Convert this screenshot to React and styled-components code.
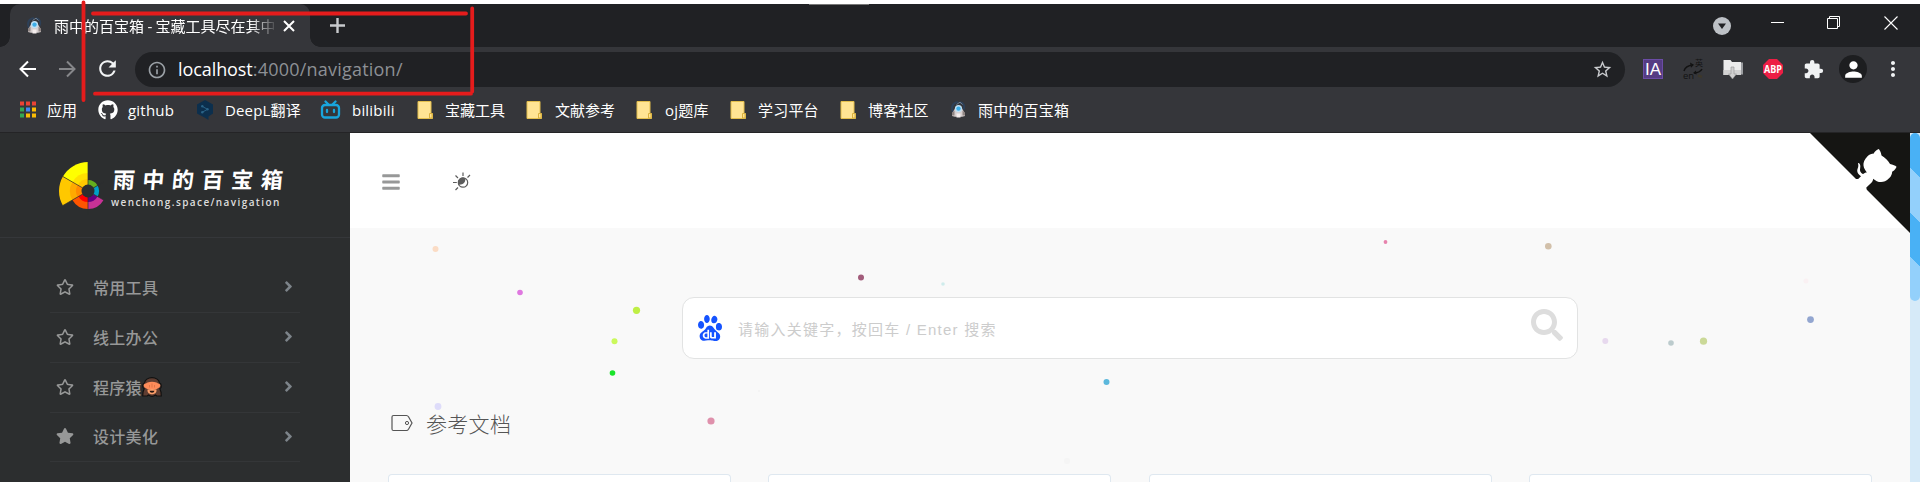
import React from "react";
import styled, { createGlobalStyle } from "styled-components";
import { FaRegStar, FaStar, FaAngleRight, FaBars, FaSearch, FaGithub } from "react-icons/fa";
import { SiBaidu } from "react-icons/si";
import { MdRefresh, MdOutlineInfo, MdStarBorder, MdExtension, MdPerson, MdMoreVert } from "react-icons/md";

const uiFont = `"Open Sans", "Noto Sans CJK SC", sans-serif`;

const GlobalStyle = createGlobalStyle`
  * { box-sizing: border-box; }
  html, body { margin: 0; padding: 0; }
  body { background: #fff; overflow: hidden; font-family: ${uiFont}; }
  svg { display: block; flex: none; }
`;

const Window = styled.div`
  position: relative;
  width: 1920px;
  height: 482px;
  padding-top: 4px;
  display: flex;
  flex-direction: column;
  overflow: hidden;
`;

/* ---------- browser chrome ---------- */
const TabStrip = styled.div`
  height: 43px;
  flex: none;
  display: flex;
  padding-left: 10px;
  background: #202124;
`;
const Tab = styled.div`
  position: relative;
  width: 300px;
  height: 43px;
  display: flex;
  align-items: center;
  padding: 0 15px 0 16px;
  border-radius: 10px 10px 0 0;
  background: #35363a;
  &::before, &::after {
    content: "";
    position: absolute;
    bottom: 0;
    width: 10px;
    height: 10px;
  }
  &::before { left: -10px; background: radial-gradient(circle at 0 0, transparent 9.5px, #35363a 10px); }
  &::after { right: -10px; background: radial-gradient(circle at 100% 0, transparent 9.5px, #35363a 10px); }
`;
const TabTitle = styled.div`
  width: 221px;
  margin-left: 11px;
  margin-right: 9px;
  overflow: hidden;
  white-space: nowrap;
  color: #fff;
  font-size: 15px;
  line-height: 24px;
  word-spacing: -0.5px;
  mask-image: linear-gradient(90deg, #000 196px, transparent 224px);
`;
const NewTab = styled.div`
  padding: 13px 0 0 19px;
`;
const WindowButtons = styled.div`
  margin-left: auto;
  margin-right: 22px;
  display: flex;
`;
const WindowButton = styled.div`
  width: ${(p) => p.$w}px;
  padding-top: ${(p) => p.$top}px;
`;
const TopSliver = styled.div`
  position: absolute;
  left: 809px;
  top: 4px;
  width: 60px;
  height: 1px;
  background: #777;
`;

const Toolbar = styled.div`
  height: 45px;
  flex: none;
  display: flex;
  align-items: flex-start;
  background: #35363a;
`;
const NavButtons = styled.div`
  width: 135px;
  flex: none;
  height: 45px;
  display: flex;
  align-items: center;
  gap: 17.5px;
  padding: 0 0 2px 16px;
`;
const AddressBar = styled.div`
  width: 1490px;
  flex: none;
  height: 35px;
  margin-top: 5px;
  display: flex;
  align-items: center;
  padding: 0 12px;
  border-radius: 18px;
  background: #202124;
`;
const Url = styled.div`
  flex: 1;
  margin-left: 11px;
  padding-bottom: 1px;
  color: #8d9095;
  font-size: 18px;
  line-height: 30px;
  letter-spacing: 0.22px;
  white-space: nowrap;
  b { font-weight: 400; color: #fff; letter-spacing: -0.08px; }
`;
const Extensions = styled.div`
  height: 45px;
  flex: none;
  display: flex;
  align-items: center;
  padding: 0 0 1px 8px;
`;
const ExtSlot = styled.div`
  width: 40px;
  flex: none;
  display: flex;
  justify-content: center;
  svg { overflow: visible; }
`;
const ExtBadge = styled.div`
  width: 20px;
  height: 20px;
  background: #553c83;
  border: 1px solid #6b4ca5;
  color: #fff;
  font: 17px/19px "Liberation Sans", sans-serif;
  text-align: center;
`;
const Avatar = styled.div`
  width: 28px;
  height: 28px;
  display: flex;
  align-items: center;
  justify-content: center;
  border-radius: 50%;
  background: #1d1e20;
`;
const BookmarksBar = styled.div`
  height: 41px;
  flex: none;
  display: flex;
  padding: 0 0 5px 19px;
  background: #35363a;
  border-bottom: 1px solid #242426;
`;
const Bookmark = styled.div`
  width: ${(p) => p.$w}px;
  flex: none;
  display: grid;
  grid-template-columns: ${(p) => p.$icon}px 1fr;
  align-items: center;
  color: #fff;
  font-size: 15px;
  line-height: 24px;
  white-space: nowrap;
  letter-spacing: ${(p) => p.$ls || 0}px;
`;

/* ---------- page ---------- */
const Page = styled.div`
  flex: 1;
  display: flex;
  min-height: 0;
`;
const Sidebar = styled.aside`
  width: 350px;
  flex: none;
  background: #2c2e2f;
`;
const Brand = styled.div`
  height: 105px;
  display: flex;
  padding: 27px 0 0 58px;
  border-bottom: 1px solid #35373a;
`;
const BrandText = styled.div`
  margin-left: 7px;
  padding-top: 2px;
  white-space: nowrap;
  color: #fff;
`;
const BrandName = styled.div`
  font: 700 22px/32px "Noto Sans CJK SC", sans-serif;
  letter-spacing: 7.6px;
  padding-left: 2px;
  transform: skewX(-5deg);
`;
const BrandUrl = styled.div`
  margin-top: 2px;
  color: #ddd;
  font: 600 10px/12px "Open Sans", sans-serif;
  letter-spacing: 1.4px;
`;
const Menu = styled.nav`
  padding: 25px 50px 0;
`;
const MenuItem = styled.div`
  height: ${(p) => p.$h}px;
  display: flex;
  align-items: center;
  padding: 0 3px 2px 6px;
  border-bottom: 1px solid #343638;
  color: #979898;
  font: 500 16px/24px "Noto Sans CJK SC", sans-serif;
`;
const MenuLabel = styled.span`
  display: flex;
  align-items: center;
  flex: 1;
  margin-left: 19px;
  letter-spacing: 0.3px;
`;
const Main = styled.main`
  position: relative;
  width: 1560px;
  flex: none;
  background: #f9f9f9;
`;
const Navbar = styled.header`
  height: 95px;
  display: flex;
  align-items: center;
  gap: 51px;
  padding: 2px 0 0 31px;
  background: #fff;
  color: #979898;
`;
const Corner = styled.svg`
  position: absolute;
  right: 0;
  top: 0;
`;
const SearchBox = styled.div`
  width: 896px;
  height: 62px;
  margin: 69px 0 0 332px;
  display: flex;
  align-items: center;
  padding: 0 14px 0 14px;
  background: #fff;
  border: 1px solid #e2e3e3;
  border-radius: 12px;
`;
const Placeholder = styled.div`
  flex: 1;
  padding-top: 3px;
  margin-left: 15px;
  color: #ccc;
  font: 15px/24px "Liberation Sans", "Noto Sans CJK SC", sans-serif;
  letter-spacing: 1.25px;
`;
const SearchIcon = styled(FaSearch)`
  margin-bottom: 6px;
  color: #ddd;
`;
const SectionTitle = styled.h4`
  display: flex;
  align-items: center;
  margin: 49px 0 0 41px;
  height: 30px;
  color: #555;
  font: 300 21px/30px "Noto Sans CJK SC", sans-serif;
  span { margin-left: 13px; padding-bottom: 1px; letter-spacing: 0.3px; }
`;
const Cards = styled.div`
  display: grid;
  grid-template-columns: repeat(4, 343px);
  column-gap: 37.3px;
  margin: 36px 0 0 38px;
`;
const Card = styled.div`
  height: 8px;
  background: #fff;
  border: 1px solid #dfe8f0;
  border-bottom: 0;
  border-radius: 4px 4px 0 0;
`;
const Particles = styled.svg`
  position: absolute;
  left: 0;
  top: 0;
  pointer-events: none;
`;
const ScrollTrack = styled.div`
  width: 10px;
  background: #d6eaf8;
`;
const ScrollThumb = styled.div`
  height: 168px;
  border-radius: 5px;
  background: repeating-linear-gradient(225deg, #49b1f5 0 31.5px, #93d0fb 31.5px 63px);
`;
const Annotation = styled.svg`
  position: absolute;
  left: 0;
  top: 0;
  pointer-events: none;
`;

const Favicon = () => (
  <svg width="17" height="17" viewBox="0 0 17 17">
    <path d="M3.200 11C.5 6 3 1.200 8 1.200M10 1.200c4 .6 5 4 3.600 7.500" fill="none" stroke="#2d4058" strokeWidth="2" />
    <path d="M6.500 3.500L10 1.200l2.500 2.300" fill="none" stroke="#6d7f93" />
    <path d="M2 15c0-3 1.500-5 3-7.500 2-1.500 5-1.500 7 0 1.500 2.500 3 4.500 3 7.500l-3 .8H5Z" fill="#d6cfcf" />
    <path d="M2 11.500l2.500-2v5H2zM15 11.500l-2.500-2v5H15z" fill="#8f8583" />
    <circle cx="8.500" cy="7.600" r="3.600" fill="#bfe0f4" />
    <circle cx="8.500" cy="7.600" r="2.200" fill="#3daee8" />
    <path d="M6.500 12.500h4v4h-4z" fill="#f4eded" />
  </svg>
);
const AppsIcon = () => (
  <svg width="18" height="17" viewBox="0 0 18 17">
    {["#ea4335", "#ea4335", "#ea4335", "#34a853", "#4285f4", "#fbbc04", "#34a853", "#fbbc04", "#fbbc04"].map((c, i) => (
      <rect key={i} x={1 + (i % 3) * 6} y={Math.floor(i / 3) * 6 + 0.5} width="4" height="4" fill={c} />
    ))}
  </svg>
);
const DeepLIcon = () => (
  <svg width="18" height="20" viewBox="0 0 18 20">
    <path d="M10 0l8 4.600v9L13.500 16.500V20l-4-2.500L2 13.600V4.600Z" fill="#0c2f4d" />
    <path d="M7.500 6.500l5 2.800-5 2.800" fill="none" stroke="#2a6387" />
    <g fill="#2a6387"><circle cx="7.300" cy="6.300" r="1.200" /><circle cx="12.500" cy="9.300" r="1.200" /><circle cx="7.300" cy="12.200" r="1.200" /></g>
  </svg>
);
const BilibiliIcon = () => (
  <svg width="21" height="20" viewBox="0 0 21 20" fill="none" stroke="#19a5dd" strokeWidth="2.300" strokeLinecap="round">
    <rect x="2" y="5" width="17" height="12.500" rx="3" />
    <path d="M5.500 1.500l3 3M15.500 1.500l-3 3M7 10v2M14 10v2" />
  </svg>
);
const FolderIcon = () => (
  <svg width="16" height="18" viewBox="0 0 16 18">
    <path d="M1 .5h13v12h1.500v5H1Z" fill="#ffe494" stroke="#e3be4c" />
    <path d="M12.500 17v-4.500h2.500V17Z" fill="#ffe494" stroke="#dbb13d" />
  </svg>
);

const bookmarks = [
  { w: 79, icon: 28, text: "应用", art: <AppsIcon /> },
  { w: 97, icon: 30, text: "github", art: <FaGithub size={20} />, ls: 0.2 },
  { w: 125, icon: 30, text: "DeepL翻译", art: <DeepLIcon />, ls: 0.15 },
  { w: 97, icon: 32, text: "bilibili", art: <BilibiliIcon />, ls: 0.2 },
  { w: 109, icon: 28, text: "宝藏工具", art: <FolderIcon /> },
  { w: 110, icon: 29, text: "文献参考", art: <FolderIcon /> },
  { w: 94, icon: 29, text: "oj题库", art: <FolderIcon />, ls: 0.2 },
  { w: 110, icon: 28, text: "学习平台", art: <FolderIcon />, ls: 0.2 },
  { w: 110, icon: 28, text: "博客社区", art: <FolderIcon />, ls: 0.2 },
  { w: 130, icon: 28, text: "雨中的百宝箱", art: <Favicon />, ls: 0.2 },
];

const polar = (r, deg) => {
  const a = (deg * Math.PI) / 180;
  return `${(31 + r * Math.sin(a)).toFixed(2)} ${(31 - r * Math.cos(a)).toFixed(2)}`;
};
const sector = (r, from, to) => `M31 31L${polar(r, from)}A${r} ${r} 0 0 1 ${polar(r, to)}Z`;
const wheel = [
  [29, -60, 0, "#ffff00"], [18, -60, 0, "#ffe100"], [12, -60, 0, "#ffc800"],
  [29, -120, -60, "#ffc800"], [18, -120, -60, "#ffaa00"], [12, -120, -60, "#ff8c00"],
  [18, -180, -120, "#ff5500"], [11, -180, -120, "#f00"],
  [18, 120, 180, "#c83296"], [11, 120, 180, "#640082"],
  [11, 60, 120, "#00a0c8"], [11, 0, 60, "#64af1e"],
];
const BrandWheel = () => (
  <svg width="46" height="55" viewBox="1 0 46 55">
    {wheel.map(([r, a, b, c], i) => <path key={i} d={sector(r, a, b)} fill={c} />)}
    {[0, 60, 120, 180, 240, 300].map((a) => (
      <path key={a} d={`M31 31L${polar(29, a)}`} stroke="#2c2e2f" strokeWidth=".7" />
    ))}
    <circle cx="31" cy="31" r="6.500" fill="#2c2e2f" />
  </svg>
);
const MonkeyIcon = () => (
  <svg width="20" height="20" viewBox="0 0 20 20" role="img" aria-label="🙈">
    <path d="M10 .7c4 0 7 2.400 7.500 5.300 2.300.6 2.300 4.800.3 5.700 1.200 2 1.500 4.500 1.500 7.300h-4.500L13.500 18c-2 1.500-5 1.500-7 0l-1.300 1H.7c0-2.800.3-5.300 1.500-7.300C.2 10.800.2 6.600 2.500 6 3 3.100 6 .7 10 .7Z" fill="#5f3d31" stroke="#111" strokeWidth="1.200" />
    <path d="M5.500 5.500Q10 3.800 14.500 5.500q1.800 1.200 2.800 1.300 1.800 1.200.3 3.400L14 12.500H6L2.400 10.200Q.9 8 2.700 6.800q1 0 2.800-1.300Z" fill="#ff8c5a" />
    <path d="M5.500 12.800q4.500-1.500 9 0c.8 6-9.800 6-9 0Z" fill="#ffa06b" />
    <path d="M7.500 13.800h5q-.3 2-2.500 2t-2.500-2Z" fill="#261510" />
    <path d="M10 6.500v4M7.500 8v2.500M12.500 8v2.500" stroke="#d56c40" strokeWidth=".7" />
  </svg>
);
const SunIcon = () => (
  <svg width="19" height="19" viewBox="0 0 19 19" fill="none" stroke="#5c5c5c" strokeWidth="1.200">
    <circle cx="11" cy="10.500" r="4.700" />
    <path d="M13.500 6.500c0 4-2.500 6.500-6.700 6.200A4.700 4.700 0 0 1 13.500 6.500Z" fill="#5c5c5c" stroke="none" />
    <path d="M11 .5V4M1 10.500h3.800M3.500 3.500L6 6M18 3l-2.500 2.500M3.500 18L6 15.500" />
  </svg>
);
const TagIcon = () => (
  <svg width="22" height="18" viewBox="0 0 22 18" fill="none" stroke="#555" strokeWidth="1.200">
    <path d="M2.500 1.500h13c1 0 1.500.5 2 1.300L21 9l-3.500 6.200c-.5.8-1 1.300-2 1.300h-13Q1 16.500 1 15V3Q1 1.500 2.500 1.500Z" />
    <circle cx="16" cy="9" r="1.600" strokeWidth="1" />
  </svg>
);

const menu = [
  { label: "常用工具", h: 50 },
  { label: "线上办公", h: 50 },
  { label: "程序猿", h: 50, monkey: true },
  { label: "设计美化", h: 49, filled: true },
];

const particles = [
  [85.5, 116, 3, "#fbdcc5"], [170, 159.5, 2.8, "#df78e0"], [286.5, 177.3, 3.6, "#bfef45"],
  [264.5, 208.2, 3, "#cbf95c"], [262.5, 240, 2.8, "#1ae42a"], [88, 273.5, 3.4, "#dedcfa"],
  [361, 288, 3.6, "#df91ac"], [511, 144.5, 3, "#a25c7b"], [593, 151, 1.8, "#cfecec"],
  [756.5, 249, 3, "#5cb8dc"], [1035.5, 109, 1.9, "#e783ad"], [1198.3, 113.2, 3.3, "#d2c0aa"],
  [1255.3, 208, 3, "#e7d9ee"], [1321, 210, 2.8, "#bccbcd"], [1353.5, 208.2, 3.6, "#cbd998"],
  [1460.5, 186.6, 3.4, "#93a6d0"], [1456, 148, 2.5, "#faf1f3"], [717, 328, 3, "#f5f5f5"],
  [409, 258, 1, "#f2f2f2"],
];

export default function App() {
  return (
    <Window>
      <GlobalStyle />
      <TabStrip>
        <Tab>
          <Favicon />
          <TabTitle>雨中的百宝箱 - 宝藏工具尽在其中</TabTitle>
          <svg width="12" height="12" viewBox="0 0 12 12" stroke="#fff" strokeWidth="2"><path d="M1 1l10 10M11 1L1 11" /></svg>
        </Tab>
        <NewTab>
          <svg width="17" height="17" viewBox="0 0 17 17" stroke="#c8cacd" strokeWidth="2.400"><path d="M8.500 1v15M1 8.500h15" /></svg>
        </NewTab>
        <WindowButtons>
          <WindowButton $w={58} $top={13}>
            <svg width="18" height="18" viewBox="0 0 18 18"><circle cx="9" cy="9" r="9" fill="#bdc1c6" /><path d="M5 6.500h8l-4 5.500z" fill="#202124" /></svg>
          </WindowButton>
          <WindowButton $w={56} $top={18}>
            <svg width="13" height="1"><rect width="13" height="1" fill="#fff" /></svg>
          </WindowButton>
          <WindowButton $w={57} $top={12}>
            <svg width="14" height="14" viewBox="0 0 14 14" fill="none" stroke="#fff"><path d="M.5 2.500h10v10H.5zM2.500 2.500V.5h10v10h-2" /></svg>
          </WindowButton>
          <WindowButton $w={14} $top={12}>
            <svg width="14" height="14" viewBox="0 0 14 14" stroke="#fff" strokeWidth="1.100"><path d="M.5.5l13 13M13.500.5l-13 13" /></svg>
          </WindowButton>
        </WindowButtons>
      </TabStrip>
      <TopSliver />
      <Toolbar>
        <NavButtons>
          <svg width="22" height="18" viewBox="0 0 22 18" fill="none" stroke="#fff" strokeWidth="2"><path d="M20 9H4.500M12 1.500L4.500 9l7.500 7.500" /></svg>
          <svg width="22" height="18" viewBox="0 0 22 18" fill="none" stroke="#86878a" strokeWidth="2"><path d="M3 9h15.500M11 1.500L18.500 9 11 16.500" /></svg>
          <MdRefresh size={25} color="#f1f3f4" />
        </NavButtons>
        <AddressBar>
          <MdOutlineInfo size={20} color="#9aa0a6" />
          <Url><b>localhost</b>:4000/navigation/</Url>
          <MdStarBorder size={21} color="#c9cbce" />
        </AddressBar>
        <Extensions>
          <ExtSlot><ExtBadge>IA</ExtBadge></ExtSlot>
          <ExtSlot>
            <svg width="20" height="20" viewBox="0 0 20 20" fill="none" stroke="#131313">
              <path d="M1 12C2 8 5 6.500 10 6M19 10c-1 2-3 3.500-8 4" strokeWidth="1.500" />
              <path d="M7 3.500l4 2.200-3 3zM13 11.500l-3 2.500 3.500 1.500z" fill="#131313" stroke="none" />
              <text x="0" y="20" fill="#131313" stroke="none" fontSize="9.500" fontFamily="Open Sans">en</text>
              <text x="12" y="7" fill="#131313" stroke="none" fontSize="8" fontFamily="Noto Sans CJK SC">英</text>
              <path d="M15 16.500l4 1.500" stroke="#3d382b" strokeWidth="2.500" />
            </svg>
          </ExtSlot>
          <ExtSlot>
            <svg width="20" height="20" viewBox="0 0 20 20">
              <path d="M17 3.500h3v12h-3z" fill="#9c9ea1" />
              <path d="M.5 1h7l1.500 2h9v13H.5z" fill="#ececec" />
              <path d="M.5 11h17.500v5H.5z" fill="#d2d2d2" />
              <path d="M8 8h3v7h2.500l-4 5-4-5H8z" fill="#d0d0d0" stroke="#909090" strokeWidth=".6" />
            </svg>
          </ExtSlot>
          <ExtSlot>
            <svg width="20" height="20" viewBox="0 0 20 20">
              <path d="M6 0h8l6 6v8l-6 6H6l-6-6V6z" fill="#ed1e45" />
              <text x="10" y="13.600" textAnchor="middle" textLength="18" lengthAdjust="spacingAndGlyphs" fill="#fff" fontSize="10" fontWeight="700" fontFamily="Open Sans">ABP</text>
            </svg>
          </ExtSlot>
          <ExtSlot><MdExtension size={21} color="#f1f3f4" /></ExtSlot>
          <ExtSlot><Avatar><MdPerson size={25} color="#fff" /></Avatar></ExtSlot>
          <ExtSlot><MdMoreVert size={24} color="#f1f3f4" /></ExtSlot>
        </Extensions>
      </Toolbar>
      <BookmarksBar>
        {bookmarks.map((b) => (
          <Bookmark key={b.text} $w={b.w} $icon={b.icon} $ls={b.ls}>
            {b.art}<span>{b.text}</span>
          </Bookmark>
        ))}
      </BookmarksBar>

      <Page>
        <Sidebar>
          <Brand>
            <BrandWheel />
            <BrandText>
              <BrandName>雨中的百宝箱</BrandName>
              <BrandUrl>wenchong.space/navigation</BrandUrl>
            </BrandText>
          </Brand>
          <Menu>
            {menu.map((m) => (
              <MenuItem key={m.label} $h={m.h}>
                {m.filled ? <FaStar size={18} /> : <FaRegStar size={18} />}
                <MenuLabel>{m.label}{m.monkey && <MonkeyIcon />}</MenuLabel>
                <FaAngleRight size={17} color="#7d848a" />
              </MenuItem>
            ))}
          </Menu>
        </Sidebar>
        <Main>
          <Navbar>
            <FaBars size={20} />
            <SunIcon />
          </Navbar>
          <Corner width="100" height="100" viewBox="0 0 250 250">
            <path d="M0,0 L115,115 L130,115 L142,142 L250,250 L250,0 Z" fill="#151513" />
            <path d="M128.3,109.0 C113.8,99.7 119.0,89.6 119.0,89.6 C122.0,82.7 120.5,78.6 120.5,78.6 C119.2,72.0 123.4,76.3 123.4,76.3 C127.3,80.9 125.5,87.3 125.5,87.3 C122.9,97.6 130.6,101.9 134.4,103.2" fill="#fff" />
            <path d="M115.0,115.0 C114.9,115.1 118.7,116.5 119.8,115.4 L133.7,101.6 C136.9,99.2 139.9,98.4 142.2,98.6 C133.8,88.0 127.5,74.4 143.8,58.0 C148.5,53.4 154.0,51.2 159.7,51.0 C160.3,49.4 163.2,43.6 171.4,40.1 C171.4,40.1 176.1,42.5 178.8,56.2 C183.1,58.6 187.2,61.8 190.9,65.4 C194.5,69.0 197.7,73.2 200.1,77.6 C213.8,80.2 216.3,84.9 216.3,84.9 C212.7,93.1 206.9,96.0 205.4,96.6 C205.1,102.4 203.0,107.8 198.3,112.5 C181.9,128.9 168.3,122.5 157.7,114.1 C157.9,116.9 156.7,120.9 152.7,124.9 L141.0,136.5 C139.8,137.7 141.6,141.9 141.8,141.8 Z" fill="#fff" />
          </Corner>
          <SearchBox>
            <SiBaidu size={26} color="#1553ff" />
            <Placeholder>请输入关键字，按回车 / Enter 搜索</Placeholder>
            <SearchIcon size={32} />
          </SearchBox>
          <SectionTitle><TagIcon /><span>参考文档</span></SectionTitle>
          <Cards><Card /><Card /><Card /><Card /></Cards>
          <Particles width="1560" height="349">
            {particles.map(([x, y, r, c], i) => <circle key={i} cx={x} cy={y} r={r} fill={c} />)}
          </Particles>
        </Main>
        <ScrollTrack><ScrollThumb /></ScrollTrack>
      </Page>

      <Annotation width="500" height="110" fill="none" stroke="#e51c1c" strokeWidth="3.800" strokeLinecap="round">
        <path d="M83.500 2.500V100M93 13.500H466M472.200 8.500V91.500M95 93.700H471" />
      </Annotation>
    </Window>
  );
}
